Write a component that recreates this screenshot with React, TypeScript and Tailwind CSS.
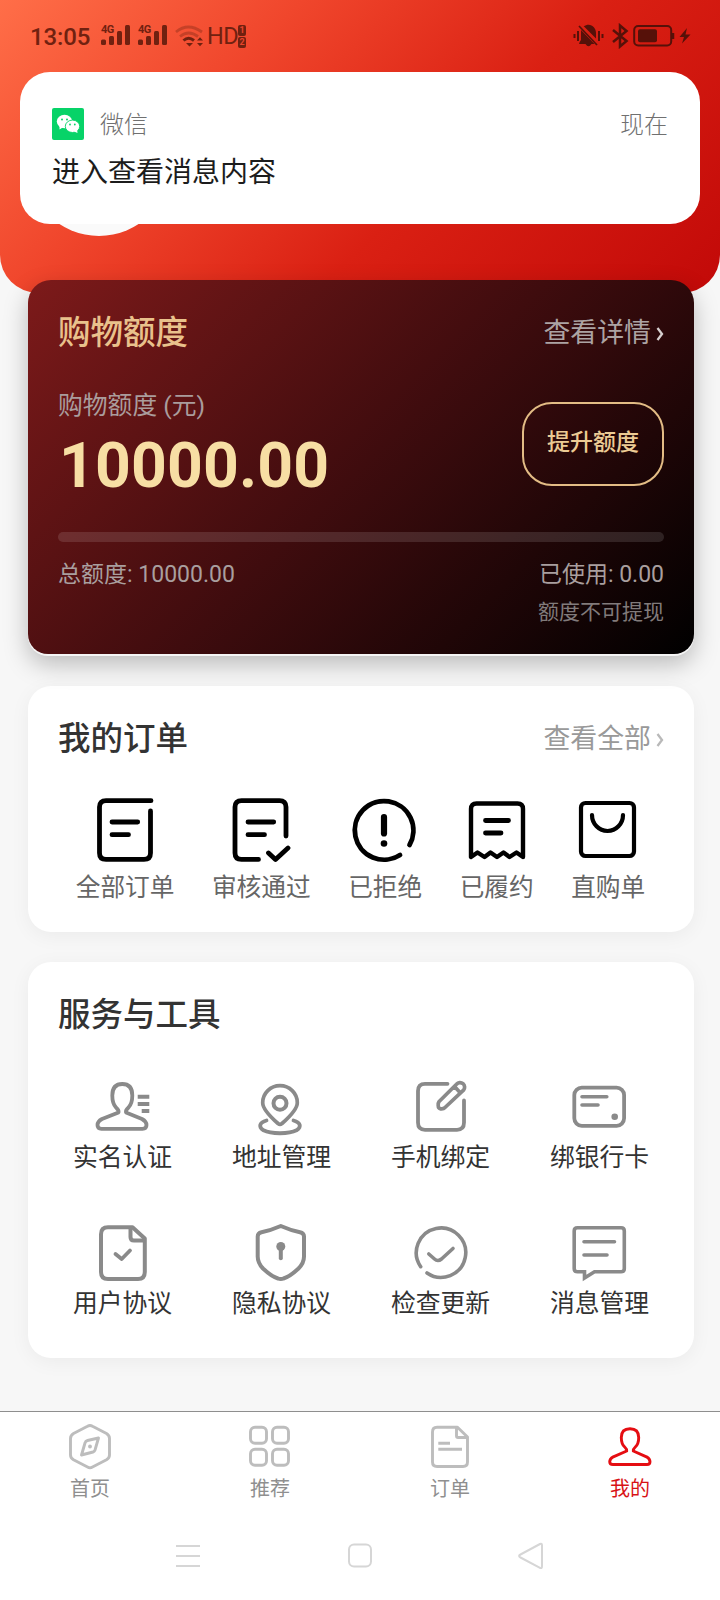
import React from 'react';

type IconItem = { label: string; icon: React.ReactNode };

const ORDER_ITEMS: IconItem[] = [
    {
        label: '全部订单',
        icon: (
            <>
                <path d="M60 10.700H15Q8.500 10.700 8.500 17V63Q8.500 69.400 15 69.400H53Q59.500 69.400 59.500 63V21" />
                <path d="M21 32H46.700M21 44.700H37.500" />
            </>
        ),
    },
    {
        label: '审核通过',
        icon: (
            <>
                <path d="M59 46V17Q59 10.700 52.500 10.700H14.500Q8 10.700 8 17V63Q8 69.400 14.500 69.400H31.500" />
                <path d="M21 32H46.700M21 44.700H37.500M41.500 63L48.500 69.500L61 58" />
            </>
        ),
    },
    {
        label: '已拒绝',
        icon: (
            <>
                <path d="M58.500 55A29.300 29.300 0 1 0 49 65" />
                <path d="M33 27V43.500" strokeWidth="6.200" />
                <circle cx="33" cy="53.500" r="3.300" fill="currentColor" stroke="none" />
            </>
        ),
    },
    {
        label: '已履约',
        icon: (
            <>
                <path d="M8 67V19Q8 13.500 13.500 13.500H54.500Q60 13.500 60 19V67L53.500 62.500L46.500 67L40.500 62.500L34 67L27.500 62.500L21.500 67L14.500 62.500Z" strokeWidth="4.400" />
                <path d="M22.500 30.500H45.500M22.500 43H38" />
            </>
        ),
    },
    {
        label: '直购单',
        icon: (
            <>
                <rect x="7" y="13" width="53" height="53" rx="4.500" strokeWidth="4.200" />
                <path d="M18 25A15.500 16 0 0 0 49 25" strokeWidth="4.200" />
            </>
        ),
    },
];

const TOOL_ITEMS: IconItem[] = [
    {
        label: '实名认证',
        icon: (
            <>
                <path d="M28.500 38.500Q29 36 26 33.500Q22.300 29.500 22.300 21.500Q22.300 10 32.300 10T42.300 21.500Q42.300 29.500 38.500 33.500Q35.500 36 36 38.500L52 45Q56.500 47.500 56.500 51Q56.500 54.800 52.500 54.800H11.500Q7.500 54.800 7.500 51Q7.500 47.500 12 45Z" strokeWidth="3.800" />
                <path d="M47.700 22.700H59.300M47.700 30H59.300M51.700 37H59.300" strokeLinecap="butt" />
            </>
        ),
    },
    {
        label: '地址管理',
        icon: (
            <>
                <path d="M33 49.500Q31 51 29 49.500Q13.700 36 13.700 28.700A17.300 17 0 0 1 48.300 28.700Q48.300 36 33 49.500Z" strokeWidth="3.700" />
                <circle cx="31" cy="29.300" r="6.500" strokeWidth="4" />
                <path d="M17.500 46.500C10.500 48.500 9 53 14.500 56.300C22 60.200 40 60.200 47.500 56.300C53 53 51.500 48.500 44.500 46.500" strokeWidth="3.800" />
            </>
        ),
    },
    {
        label: '手机绑定',
        icon: (
            <>
                <path d="M39.500 9.800H17Q10 9.800 10 17V48.500Q10 55.800 17 55.800H49Q56 55.800 56 48.500V26.500" strokeWidth="3.800" />
                <path d="M30.900 27.800L48.500 10.200A4.400 4.400 0 0 1 55.500 16.200L37 33.500Q35.500 35.200 32.500 34.800Q30.300 34.500 30.200 31.500Q30 29 30.900 27.800ZM46.500 12.500L52 18.500" strokeWidth="3.700" />
            </>
        ),
    },
    {
        label: '绑银行卡',
        icon: (
            <>
                <rect x="7.300" y="13.600" width="49.800" height="38.200" rx="7.500" strokeWidth="3.800" />
                <path d="M15 22.700H39.800M15 31H31" strokeWidth="3.600" />
                <circle cx="47.700" cy="42.700" r="3.300" fill="currentColor" stroke="none" />
            </>
        ),
    },
    {
        label: '用户协议',
        icon: (
            <>
                <path d="M42.500 7.200H18Q11 7.200 11 14.200V52Q11 59 18 59H48Q54.800 59 54.800 52V18.500Z" />
                <path d="M40.500 8.500V17Q40.500 20.500 44 20.500H53" strokeWidth="4" />
                <path d="M25.500 34L31.700 39L40 30.500" strokeWidth="3.800" />
            </>
        ),
    },
    {
        label: '隐私协议',
        icon: (
            <>
                <path d="M31.800 6Q42 10.500 51 12.200Q55 13 55 16.500V36.500Q55 43 49.500 48.500Q41 56.500 34.500 58.500Q31.800 59.700 29 58.500Q22.500 56.500 14 48.500Q8.700 43 8.700 36.500V16.500Q8.700 13 12.500 12.200Q21.500 10.500 31.800 6Z" />
                <circle cx="31.800" cy="26.500" r="4.500" fill="currentColor" stroke="none" />
                <path d="M31.800 28V38.300" />
            </>
        ),
    },
    {
        label: '检查更新',
        icon: (
            <>
                <path d="M12.700 46.700A24.700 24.700 0 1 1 19 53" strokeWidth="3.600" />
                <path d="M20.800 34L26.500 39Q29.800 42 33.500 39L45 28.500" strokeWidth="3.600" />
            </>
        ),
    },
    {
        label: '消息管理',
        icon: (
            <>
                <path d="M10.500 7.800H54Q57.300 7.800 57.300 11V48.500Q57.300 51.800 54 51.800H27.500L17.500 58V51.800H10.500Q7.200 51.800 7.200 48.500V11Q7.200 7.800 10.500 7.800Z" strokeWidth="3.600" strokeLinejoin="miter" />
                <path d="M17 21.700H47.500M17 35H40" strokeWidth="3.600" />
            </>
        ),
    },
];

const TABS: IconItem[] = [
    {
        label: '首页',
        icon: (
            <>
                <path d="M21.500 3.200Q24 1.800 26.500 3.200L40.500 10.500Q43.500 12.300 43.500 15.500V32Q43.500 35 40.500 36.800L26.500 44Q24 45.500 21.500 44L7.500 36.800Q4.500 35 4.500 32V15.500Q4.500 12.300 7.500 10.500Z" />
                <path d="M21.500 17.500Q19.500 18 19 20L15.500 32L27 29Q28.500 28.500 29 27L32.500 15Z" />
                <circle cx="24" cy="23.500" r="1.900" fill="currentColor" stroke="none" />
            </>
        ),
    },
    {
        label: '推荐',
        icon: (
            <>
                <rect x="4.500" y="4.200" width="16" height="16" rx="4.500" />
                <rect x="26.500" y="4.200" width="16" height="16" rx="4.500" />
                <rect x="4.500" y="26.200" width="16" height="16" rx="4.500" />
                <rect x="26.500" y="26.200" width="16" height="16" rx="4.500" />
            </>
        ),
    },
    {
        label: '订单',
        icon: (
            <>
                <path d="M31.500 4.200H11Q6.500 4.200 6.500 9V39Q6.500 43.500 11 43.500H37Q41.500 43.500 41.500 39V14ZM30.500 4.500V13Q30.500 14.500 32 14.500H41" />
                <path d="M12.300 20.200H24M12.300 26.200H36" strokeLinecap="butt" />
            </>
        ),
    },
    {
        label: '我的',
        icon: (
            <path d="M20.700 28Q20.900 26 18.700 24Q15.300 21 15.300 14.500Q15.300 5.700 24 5.700T32.700 14.500Q32.700 21 29.300 24Q27.100 26 27.300 28L40.500 33.800Q44 36 44 38.700Q44 41.500 41 41.500H7Q3.700 41.500 3.700 38.700Q3.700 36 7.300 33.800Z" />
        ),
    },
];

const Signal: React.FC = () => (
    <div className="relative h-[22px] w-[30px]">
        <svg width="30" height="22" viewBox="0 0 30 22" fill="currentColor">
            <rect x="0" y="14.500" width="5" height="5.500" rx="1.500" />
            <rect x="8" y="11" width="5" height="9" rx="1.500" />
            <rect x="16" y="6" width="5" height="14" rx="1.500" />
            <rect x="24" y="0" width="5" height="20" rx="1.500" />
        </svg>
        <span className="absolute -top-[2px] left-0 text-[11px] leading-[13px] font-bold tracking-[-0.5px]">4G</span>
    </div>
);

const StatusBar: React.FC = () => (
    <div className="flex h-[72px] items-center justify-between pr-[29px] pl-[30px] text-[#702110]">
        <div className="flex items-center">
            <span className="w-[71px] pt-[2px] text-[24px] leading-none font-medium tracking-[-0.1px]">13:05</span>
            <div className="flex gap-[7px]">
                <Signal />
                <Signal />
            </div>
            <svg width="30" height="24" viewBox="0 0 30 24" fill="none" stroke="currentColor" strokeWidth="2.800" className="ml-[6px]">
                <path d="M2 8Q14 -2 28 8M6 12.500Q14.500 5.500 24 12.500" opacity=".35" />
                <path d="M9.500 16.500Q14.500 12 20 16.500" strokeWidth="3" />
                <path d="M12 19H19L15.500 22.500ZM23 16.500L26 13.300L29 16.500ZM23 19L26 22.200L29 19Z" fill="currentColor" stroke="none" />
            </svg>
            <span className="ml-[3px] w-[31px] pt-[2px] text-[23.500px] leading-none tracking-[-0.6px]">HD</span>
            <div className="flex flex-col gap-px">
                {['1', '2'].map((n) => (
                    <span key={n} className="flex h-[11px] w-[8px] items-center justify-center rounded-[2px] bg-[#702110] text-[9px] leading-none font-bold text-[#e8452c]">{n}</span>
                ))}
            </div>
        </div>
        <div className="flex items-center text-[#561109]">
            <svg width="32" height="26" viewBox="0 0 32 26" fill="currentColor">
                <path d="M10.500 3.500C17 -1 23 4 23 10V15.500L11 3.500ZM8 7L21.500 21H18.500Q15.500 25.500 12.500 21H6Q6 19.500 8 17Z" />
                <path d="M6 3L24 22" stroke="currentColor" strokeWidth="1.700" />
                <path d="M1.500 11V15M5 8V18M26 8V18M29.500 11V15" stroke="currentColor" strokeWidth="2" />
            </svg>
            <svg width="18" height="26" viewBox="0 0 18 26" fill="none" stroke="currentColor" strokeWidth="2.500" className="ml-[6px]">
                <path d="M2 7L15.500 18L9 23.500V2.500L15.500 8L2 19" />
            </svg>
            <svg width="42" height="24" viewBox="0 0 42 24" fill="none" stroke="currentColor" strokeWidth="2" className="ml-[4px]">
                <rect x="1.200" y="2" width="37" height="19.500" rx="4" />
                <rect x="5" y="5.200" width="19" height="13" rx="2" fill="currentColor" stroke="none" />
                <path d="M40 9V15" strokeWidth="2.500" />
            </svg>
            <svg width="12" height="18" viewBox="0 0 12 18" fill="currentColor" className="ml-[4px]">
                <path d="M8 1L0.500 10H5L3 16.500L11.500 7.500H6.500Z" />
            </svg>
        </div>
    </div>
);

const Notification: React.FC = () => (
    <div className="relative mx-5 h-[152px] rounded-[30px] bg-white px-8 pt-9">
        <div className="flex h-8 items-center text-[24px] leading-none font-light text-[#707070]">
            <svg width="32" height="32" viewBox="0 0 32 32" className="mr-4">
                <rect width="32" height="32" rx="2" fill="#07d368" />
                <ellipse cx="12.500" cy="13.500" rx="7.700" ry="6.700" fill="#fff" />
                <path d="M7.500 18L7.500 21.500L11.500 19Z" fill="#fff" />
                <ellipse cx="20.500" cy="18.300" rx="7.200" ry="6.200" fill="#fff" stroke="#07d368" strokeWidth=".9" />
                <path d="M22 23.500L25.500 25L25 21Z" fill="#fff" />
                <circle cx="10" cy="11.500" r="1" fill="#07d368" />
                <circle cx="15" cy="11.500" r="1" fill="#07d368" />
                <circle cx="18" cy="16.500" r=".9" fill="#07d368" />
                <circle cx="22.800" cy="16.500" r=".9" fill="#07d368" />
            </svg>
            <span className="flex-1 pt-[1px]">微信</span>
            <span className="pt-[1px]">现在</span>
        </div>
        <div className="mt-[19px] text-[28px] leading-[28px] text-[#1c1c1c]">进入查看消息内容</div>
    </div>
);

const Chevron: React.FC<{ className?: string }> = ({ className }) => (
    <svg width="8" height="14" viewBox="0 0 8 14" fill="none" stroke="currentColor" strokeWidth="2.300" className={className}>
        <path d="M1.500 1L6 7L1.500 13" />
    </svg>
);

const QuotaCard: React.FC = () => (
    <section className="relative mr-[26px] mb-[2px] ml-[28px] h-[374px] rounded-t-[23px] rounded-b-[20px] bg-[linear-gradient(135deg,#7d1a1a_0%,#3f0c0e_50%,#000_100%)] px-[30px] pt-[37px] shadow-[0_2px_0_#f5f5f5,0_10px_24px_rgba(0,0,0,0.25)]">
        <div className="flex h-[33px] items-center justify-between leading-none">
            <h2 className="text-[32.500px] font-medium text-[#e9c18c]">购物额度</h2>
            <div className="flex items-center text-[26.880px] text-[#aca3a3]">
                查看详情
                <Chevron className="ml-[5px] text-[#d6cfcf]" />
            </div>
        </div>
        <div className="mt-[42px] flex items-start justify-between">
            <div>
                <div className="text-[24.800px] leading-[28px] text-[#aa9c9c]">购物额度 (元)</div>
                <div className="mt-[15px] pl-px text-[62.500px] leading-[62px] font-bold tracking-[0.15px] text-[#f7dea4]">10000.00</div>
            </div>
            <button className="mt-[10px] h-[84px] w-[142px] rounded-[30px] border-2 border-[#e3bc85] pb-[2px] text-[23.040px] font-medium text-[#eccb94]">
                提升额度
            </button>
        </div>
        <div className="mt-[35px] h-[10px] rounded-full bg-white/12" />
        <div className="mt-[21px] flex justify-between text-[23px] leading-[24px] text-[#a99f9f]">
            <span>总额度: 10000.00</span>
            <span>已使用: 0.00</span>
        </div>
        <div className="mt-[14px] text-right text-[21px] leading-[22px] text-[#817b7b]">额度不可提现</div>
    </section>
);

const TabBar: React.FC = () => (
    <nav className="flex h-[95px] border-t border-[#8e8e8e] bg-white pt-[11px]">
        {TABS.map((tab) => (
            <div key={tab.label} className={tab.label === '我的' ? 'flex flex-1 flex-col items-center text-[#e50d12]' : 'flex flex-1 flex-col items-center text-[#bdbdbd]'}>
                <svg width="48" height="48" viewBox="0 0 48 48" fill="none" stroke="currentColor" strokeWidth="2.900" strokeLinecap="round" strokeLinejoin="round">
                    {tab.icon}
                </svg>
                <span className={tab.label === '我的' ? 'mt-[8px] text-[20px] leading-[20px] text-[#d81216]' : 'mt-[8px] text-[20px] leading-[20px] text-[#8f8f8f]'}>{tab.label}</span>
            </div>
        ))}
    </nav>
);

const SystemNav: React.FC = () => (
    <div className="flex flex-1 justify-center gap-[144px] bg-white pt-[35px] text-[#d6d6d6]">
        <svg width="28" height="28" viewBox="0 0 28 28" fill="none" stroke="currentColor" strokeWidth="2">
            <path d="M2 5H26M2 15H26M2 25H26" />
        </svg>
        <svg width="28" height="28" viewBox="0 0 28 28" fill="none" stroke="currentColor" strokeWidth="2">
            <rect x="3" y="3.500" width="22" height="22" rx="5" />
        </svg>
        <svg width="28" height="28" viewBox="0 0 28 28" fill="none" stroke="currentColor" strokeWidth="2" strokeLinejoin="round">
            <path d="M22 3Q24 2 24 4.500V25Q24 28 22 26.800L2.500 16.500Q-0.300 15 2.500 13.500Z" />
        </svg>
    </div>
);

const App: React.FC = () => {
    return (
        <div className="flex h-[1600px] w-[720px] flex-col overflow-hidden bg-[#f7f7f7] font-['Roboto','Noto_Sans_CJK_SC',sans-serif]">
            <header className="relative h-[293px] shrink-0 rounded-b-[38px] bg-[linear-gradient(135deg,#ff6e48_0%,#f0462c_30%,#da2013_60%,#c20908_100%)]">
                <StatusBar />
                {/* Avatar, mostly hidden behind the notification */}
                <div className="absolute top-[92px] left-[27px] size-[144px] rounded-full bg-[#fafafa]" />
                <Notification />
            </header>

            <main className="-mt-[13px] flex flex-col gap-[30px]">
                <QuotaCard />

                <section className="mr-[26px] ml-[28px] h-[246px] rounded-[23px] bg-white px-[30px] pt-[37px] shadow-[0_4px_20px_rgba(0,0,0,0.05)]">
                    <div className="flex h-[33px] items-center justify-between leading-none">
                        <h2 className="text-[32.500px] font-medium text-[#333]">我的订单</h2>
                        <div className="flex items-center text-[26.880px] text-[#999]">
                            查看全部
                            <Chevron className="ml-[5px] text-[#b9b9b9]" />
                        </div>
                    </div>
                    <div className="mt-[34px] -ml-[1px] flex justify-around">
                        {ORDER_ITEMS.map((item) => (
                            <div key={item.label} className="flex flex-col items-center">
                                <svg width="68" height="80" viewBox="0 0 68 80" fill="none" stroke="currentColor" strokeWidth="4.800" strokeLinecap="round" strokeLinejoin="round" className="text-black">
                                    {item.icon}
                                </svg>
                                <span className="mt-[5px] text-[24.700px] leading-[26px] text-[#666]">{item.label}</span>
                            </div>
                        ))}
                    </div>
                </section>

                <section className="mr-[26px] ml-[28px] h-[396px] rounded-[23px] bg-white pt-[37px] shadow-[0_4px_20px_rgba(0,0,0,0.05)]">
                    <h2 className="h-[33px] px-[30px] text-[32.500px] leading-none font-medium text-[#333]">服务与工具</h2>
                    <div className="mx-[15px] mt-[42px] grid grid-cols-4 gap-y-[49px]">
                        {TOOL_ITEMS.map((item) => (
                            <div key={item.label} className="flex h-[97px] flex-col items-center">
                                <svg width="64" height="64" viewBox="0 0 64 64" fill="none" stroke="currentColor" strokeWidth="4" strokeLinecap="round" strokeLinejoin="round" className="mr-[2px] text-[#8a8a8a]">
                                    {item.icon}
                                </svg>
                                <span className="mt-[7px] text-[24.800px] leading-[26px] text-[#333]">{item.label}</span>
                            </div>
                        ))}
                    </div>
                </section>
            </main>

            <footer className="mt-auto flex h-[189px] shrink-0 flex-col">
                <TabBar />
                <SystemNav />
            </footer>
        </div>
    );
};

export default App;
